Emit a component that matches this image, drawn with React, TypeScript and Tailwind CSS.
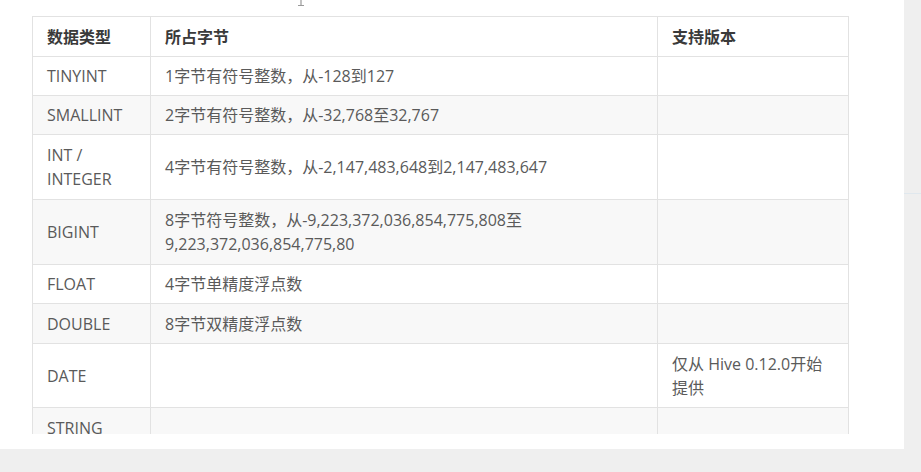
const rows: { type: React.ReactNode; size: React.ReactNode; ver?: React.ReactNode; h: string }[] = [
  { type: 'TINYINT', size: '1字节有符号整数，从-128到127', h: 'h-[39px]' },
  { type: 'SMALLINT', size: '2字节有符号整数，从-32,768至32,767', h: 'h-[39px]' },
  { type: <>INT /<br />INTEGER</>, size: '4字节有符号整数，从-2,147,483,648到2,147,483,647', h: 'h-[65px]' },
  {
    type: 'BIGINT',
    size: <>8字节符号整数，从-9,223,372,036,854,775,808至<br />9,223,372,036,854,775,80</>,
    h: 'h-[65px]',
  },
  { type: 'FLOAT', size: '4字节单精度浮点数', h: 'h-[39px]' },
  { type: 'DOUBLE', size: '8字节双精度浮点数', h: 'h-[40px]' },
  { type: 'DATE', size: '', ver: <>仅从 Hive 0.12.0开始<br />提供</>, h: 'h-[64px]' },
  { type: 'STRING', size: '', h: 'h-[40px]' },
]

export default function App() {
  return (
    <div className="w-[921px] h-[472px] bg-[#efefef] flex flex-col overflow-hidden" style={{ fontFamily: '"Open Sans", "Noto Sans CJK SC", sans-serif' }}>
      <div className="flex">
        <div className="relative w-[904px] h-[449px] bg-white pt-4 pl-8 overflow-hidden">
          {/* text cursor left in the capture */}
          <svg className="absolute left-[296px] top-0" width="10" height="7" viewBox="0 0 10 7">
            <path d="M5 0v5M2 5.5h6" stroke="#9a9a9a" strokeWidth="1.2" fill="none" />
          </svg>
          <div className="h-[418px] w-[820px] overflow-hidden">
            <table className="border-collapse text-[16px] leading-6 text-[#5a5a5a] table-fixed w-[816px]">
              <colgroup>
                <col className="w-[118px]" />
                <col className="w-[507px]" />
                <col className="w-[191px]" />
              </colgroup>
              <thead>
                <tr className="h-[40px] bg-white text-left">
                  <th className="border border-[#e2e2e2] pl-[14px] font-bold text-[#3a3a3a]">数据类型</th>
                  <th className="border border-[#e2e2e2] pl-[14px] font-bold text-[#3a3a3a]">所占字节</th>
                  <th className="border border-[#e2e2e2] pl-[14px] font-bold text-[#3a3a3a]">支持版本</th>
                </tr>
              </thead>
              <tbody>
                {rows.map((r, i) => (
                  <tr key={i} className={`${r.h} ${i % 2 === 1 ? 'bg-[#f8f8f8]' : 'bg-white'}`}>
                    <td className="border border-[#e2e2e2] pl-[14px] align-middle">{r.type}</td>
                    <td className="border border-[#e2e2e2] pl-[14px] align-middle">{r.size}</td>
                    <td className="border border-[#e2e2e2] pl-[14px] align-middle">{r.ver}</td>
                  </tr>
                ))}
              </tbody>
            </table>
          </div>
        </div>
        <div className="flex-1 h-[449px] flex flex-col">
          <div className="h-[193px]" />
          <div className="h-px bg-[#e0e8ee]" />
        </div>
      </div>
    </div>
  )
}
